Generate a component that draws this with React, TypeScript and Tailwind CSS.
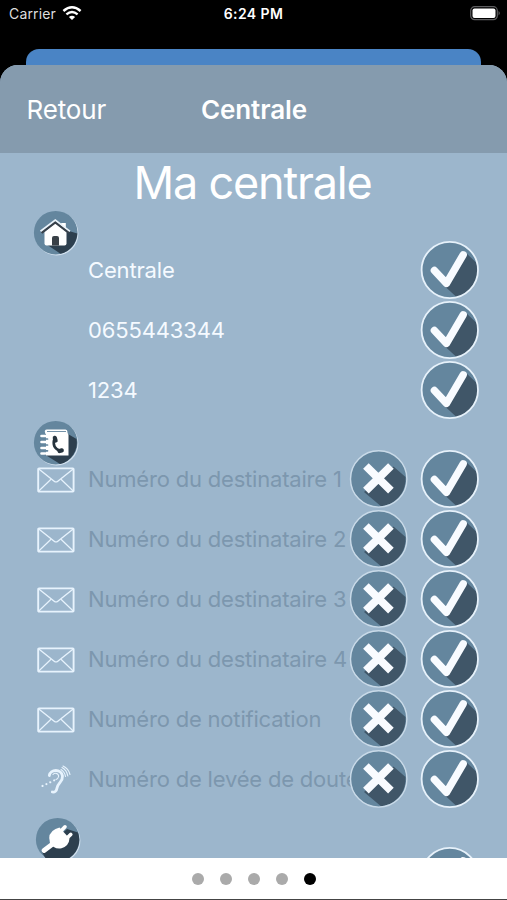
import type { ReactNode } from "react";

const recipients = [
  "Numéro du destinataire 1",
  "Numéro du destinataire 2",
  "Numéro du destinataire 3",
  "Numéro du destinataire 4",
  "Numéro de notification",
];

function CheckIcon() {
  return (
    <svg viewBox="0 0 60 60" className="block h-[60px] w-[60px]">
      <circle cx="29.8" cy="30" r="28" fill="#64869e" />
      <path d="M45.5 12.5 L56.8 23 A28 28 0 0 1 36.5 57 L25 46.5 Z" fill="#405668" />
      <circle cx="29.8" cy="30" r="28.2" fill="none" stroke="#e6f1fa" strokeWidth="1.8" />
      <path
        d="M14.4 30.5 L26.5 43.4 L43.2 14.8"
        fill="none"
        stroke="#f8fbff"
        strokeWidth="7.4"
        strokeLinecap="round"
        strokeLinejoin="round"
      />
    </svg>
  );
}

function CrossIcon() {
  return (
    <svg viewBox="0 0 60 60" className="block h-[60px] w-[60px]">
      <circle cx="29.7" cy="29.9" r="28" fill="#64869e" />
      <path d="M44.5 17.5 L56.5 28 A27 27 0 0 1 32 57.2 L15 43 Z" fill="#405668" />
      <circle cx="29.7" cy="29.9" r="28.2" fill="none" stroke="#c9dae8" strokeWidth="1.4" />
      <path d="M16.9 17 L41.9 41.6 M41.9 17 L16.9 41.6" stroke="#f8fbff" strokeWidth="8" />
    </svg>
  );
}

function Badge({ shadow, children }: { shadow: string; children: ReactNode }) {
  return (
    <svg viewBox="0 0 46 46" className="block h-[46px] w-[46px] shrink-0">
      <circle cx="23.6" cy="23.7" r="21.8" fill="#d3e1ee" />
      <circle cx="22.7" cy="22.7" r="21.8" fill="#64869e" />
      <path d={shadow} fill="#2d3f4e" />
      {children}
    </svg>
  );
}

function HouseBadge() {
  return (
    <Badge shadow="M36 21 L44.3 23.5 A21.8 21.8 0 0 1 27.5 43.8 L13 34 Z">
      <path d="M28.2 13 H32.8 V20 L28.2 16 Z" fill="#fff" />
      <path d="M11.5 22 L22.3 13 L33.5 22 V33.5 Q33.5 35.5 31.5 35.5 H13.5 Q11.5 35.5 11.5 33.5 Z" fill="#fff" />
      <path d="M8.5 22.8 L22.3 12.2 L36 22.8" fill="none" stroke="#38414a" strokeWidth="2.4" />
      <path d="M7.5 21.3 L22.3 10 L37 21.3" fill="none" stroke="#eaf3fa" strokeWidth="1.7" />
      <path d="M19 35.5 V28 Q19 26 21 26 H24 Q26 26 26 28 V35.5 Z" fill="#394047" />
    </Badge>
  );
}

function PhonebookBadge() {
  return (
    <Badge shadow="M35 14 L43.5 19 A21.8 21.8 0 0 1 27 44 L11 34 Z">
      <path d="M12.5 14 Q10.5 9.5 14 9.5 H32.5 Q34.5 9.5 34.5 12 V14 Z" fill="#fff" />
      <path d="M14 11.5 H33" stroke="#64869e" strokeWidth="0.9" />
      <path d="M13 13 H33.5 Q35.5 13 35.5 15 V35.5 H13 Z" fill="#fff" />
      <path
        d="M8.5 16 H16 M8.5 22 H16 M8.5 28 H16 M8.5 33.5 H16"
        stroke="#fff"
        strokeWidth="2.6"
        strokeLinecap="round"
      />
      <path d="M11.5 19 H14.5 M11.5 25 H14.5 M11.5 30.8 H14.5" stroke="#64869e" strokeWidth="1.7" strokeLinecap="round" />
      <path d="M21.5 18.5 Q18.5 28 27.5 31" fill="none" stroke="#26333d" strokeWidth="2.6" />
      <path d="M21.8 17.8 L22.6 20.5 M26.5 31 L28.8 30.4" stroke="#26333d" strokeWidth="4.2" strokeLinecap="round" />
    </Badge>
  );
}

function PlugBadge() {
  return (
    <Badge shadow="M32 12 L43 15.5 A21.8 21.8 0 0 1 10 40.6 L7 35 Z">
      <path d="M9 33.5 L17 27.5" stroke="#fff" strokeWidth="4.8" strokeLinecap="round" />
      <path d="M15 26 Q12 16 20.5 12 L24.5 10.5 L34.5 21.5 Q34 29 26.5 31.3 Q18.5 32.5 15 26 Z" fill="#fff" />
      <path d="M26 14 L30 9.8 M31.5 21.5 L35.8 17.4" stroke="#fff" strokeWidth="3.6" strokeLinecap="round" />
    </Badge>
  );
}

function MailIcon() {
  return (
    <svg viewBox="0 0 38 26" className="block h-[26px] w-[38px]" fill="none" stroke="#e7f3fd">
      <rect x="1.2" y="1.4" width="35.4" height="23.2" rx="0.8" strokeWidth="1.9" />
      <path d="M1.8 2 L17.2 14.2 Q19 15.6 20.8 14.2 L36.2 2" strokeWidth="1.4" />
      <path d="M1.8 24 L14 12.2 M36.2 24 L24 12.2" strokeWidth="1.2" />
    </svg>
  );
}

function EarIcon() {
  return (
    <svg viewBox="0 0 32 30" className="block h-[30px] w-8" fill="none" stroke="#e7f3fd" strokeLinecap="round">
      <path d="M9.3 10.5 C10 4 21.5 3.5 22.5 11 C23 17 18 17.5 17 23 C16.5 26.5 14.5 27.5 12.3 27" strokeWidth="2.8" />
      <path d="M13 9.5 C14.5 7 19 8.5 18.6 11.5 C18.3 13 17.5 14 16 14.5" strokeWidth="1.1" />
      <path d="M21 4.5 Q24.8 7 25.5 11.5" strokeWidth="1.1" />
      <path d="M22 2.5 Q26.8 5 27.8 11" strokeWidth="1.1" />
      <path d="M23 1 Q28.5 3.5 30 9.5" strokeWidth="1.1" />
      <path d="M2.5 21 L15 15" strokeWidth="2.1" strokeDasharray="0.1 4.2" />
    </svg>
  );
}

function ValueRow({ value }: { value: string }) {
  return (
    <div className="flex h-[60px] items-center pl-[88px] pr-[27.5px]">
      <span className="flex-1 pt-px text-[22px] tracking-[-0.15px] text-[#f5faff]">{value}</span>
      <CheckIcon />
    </div>
  );
}

function RecipientRow({ label, icon }: { label: string; icon: ReactNode }) {
  return (
    <div className="flex h-[60px] items-center pr-[27.5px]">
      <div className="flex w-[88px] shrink-0 justify-center pr-[13px] pl-[37px] pt-px">{icon}</div>
      <div className="w-[260.5px] shrink-0 whitespace-nowrap pt-px text-[22px] tracking-[-0.19px] text-[#7c97ae]">
        {label}
      </div>
      <div className="z-10 flex gap-[11px]">
        <CrossIcon />
        <CheckIcon />
      </div>
    </div>
  );
}

function StatusBar() {
  return (
    <div className="grid h-[49px] grid-cols-3 items-start px-[9px] pt-[4px] text-[14px] leading-5 text-white">
      <div className="flex items-center gap-[6px]">
        <span className="tracking-[0.15px] text-[#dedede]">Carrier</span>
        <svg viewBox="0 0 20 14" className="-mt-[2px] h-[14px] w-5" fill="none" stroke="#fff">
          <path d="M1.4 5 Q10 -2.4 18.6 5" strokeWidth="2.5" />
          <path d="M4.4 8.3 Q10 3.6 15.6 8.3" strokeWidth="2.4" />
          <path d="M6.9 10.9 Q10 8.5 13.1 10.9 L10 14 Z" fill="#fff" stroke="none" />
        </svg>
      </div>
      <span className="text-center font-semibold tracking-[0.4px]">6:24 PM</span>
      <div className="-mr-[3px] flex justify-end pt-[2px]">
        <svg viewBox="0 0 31 15" className="h-[15px] w-[31px]">
          <rect x="0.7" y="0.7" width="26.6" height="13" rx="4" fill="none" stroke="#5e5e60" strokeWidth="1.2" />
          <rect x="2.5" y="2.4" width="23" height="9.6" rx="2" fill="#fff" />
          <path d="M28.6 5 Q30.8 7.2 28.6 9.5 Z" fill="#6e6e70" />
        </svg>
      </div>
    </div>
  );
}

export default function App() {
  return (
    <div className="flex h-[900px] w-[507px] flex-col overflow-hidden bg-black font-['Inter',sans-serif]">
      <StatusBar />
      <div className="mx-[26px] h-4 shrink-0 rounded-t-[13px] bg-[#4a84c5]" />
      <div className="flex min-h-0 flex-1 flex-col overflow-hidden rounded-t-[18px] bg-[#9cb6cc]">
        <header className="grid h-[88px] shrink-0 grid-cols-[1fr_auto_1fr] items-center bg-[#859bae] px-[26.5px] text-[26px] text-white">
          <span className="tracking-[-0.15px]">Retour</span>
          <h1 className="pl-px font-semibold tracking-[-0.1px]">Centrale</h1>
        </header>

        <main className="min-h-0 flex-1 overflow-hidden">
          <h2 className="flex h-[57px] items-center justify-center pt-[2px] pr-[2px] text-[45px] tracking-[-1.2px] text-white">
            Ma centrale
          </h2>

          <section>
            <div className="h-[30px] pl-[33px]">
              <HouseBadge />
            </div>
            <ValueRow value="Centrale" />
            <ValueRow value="0655443344" />
            <ValueRow value="1234" />
          </section>

          <section>
            <div className="h-[29px] pl-[33px]">
              <PhonebookBadge />
            </div>
            {recipients.map((label) => (
              <RecipientRow key={label} label={label} icon={<MailIcon />} />
            ))}
            <RecipientRow label="Numéro de levée de doute" icon={<EarIcon />} />
          </section>

          <section className="pt-[8px]">
            <div className="h-[29px] pl-[35px]">
              <PlugBadge />
            </div>
            <ValueRow value="" />
          </section>
        </main>

        <footer className="flex h-[42px] shrink-0 items-center justify-center gap-4 border-b border-[#444] bg-white">
          <span className="h-3 w-3 rounded-full bg-[#aaa]" />
          <span className="h-3 w-3 rounded-full bg-[#aaa]" />
          <span className="h-3 w-3 rounded-full bg-[#aaa]" />
          <span className="h-3 w-3 rounded-full bg-[#aaa]" />
          <span className="h-3 w-3 rounded-full bg-black" />
        </footer>
      </div>
    </div>
  );
}
